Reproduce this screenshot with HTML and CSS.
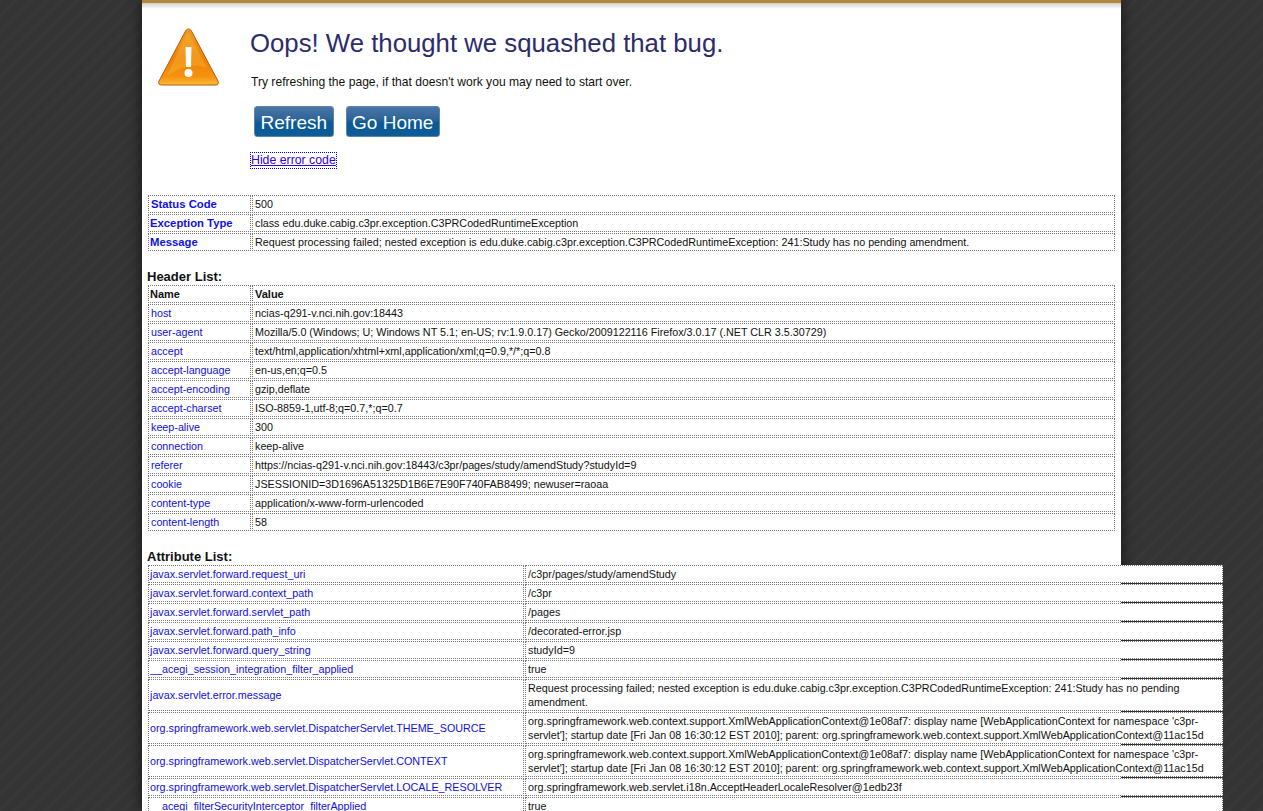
FILE: index.html
```html
<!DOCTYPE html>
<html lang="en">

<head>
    <meta charset="UTF-8">
    <title>Error</title>
    <link rel="stylesheet" href="styles.css">
</head>

<body>
    <div class="page">
        <div class="intro">
            <div class="icon-col">
                <svg class="warn-icon" width="64" height="60" viewBox="0 0 64 60">
                    <defs>
                        <linearGradient id="warnFill" x1="0" y1="0" x2="0" y2="1">
                            <stop offset="0" stop-color="#f09a20" />
                            <stop offset="0.55" stop-color="#ee8208" />
                            <stop offset="0.85" stop-color="#f59210" />
                            <stop offset="1" stop-color="#ffbc38" />
                        </linearGradient>
                    </defs>
                    <path d="M31.500 1 C33 1 34 2 35 4 L61 53 C62 55.500 61 57 58.500 57 L4.500 57 C2 57 1 55.500 2 53 L28 4 C29 2 30 1 31.500 1 Z" fill="url(#warnFill)" stroke="#b85a12" stroke-width="1" />
                    <path d="M31.500 5 L50 40 C36 34 22 40 10 48 L28 9 Z" fill="#ffc64a" opacity="0.3" />
                    <path d="M28.500 19 L34.500 19 L34 39 L29 39 Z" fill="#fff" />
                    <circle cx="31.500" cy="45" r="4" fill="#fff" />
                </svg>
            </div>
            <div class="intro-text">
                <h1>Oops! We thought we squashed that bug.</h1>
                <p>Try refreshing the page, if that doesn't work you may need to start over.</p>
                <div class="btn-row">
                    <button class="btn">Refresh</button>
                    <button class="btn">Go Home</button>
                </div>
                <a class="toggle" href="#">Hide error code</a>
            </div>
        </div>

        <table class="info status-table">
            <tr>
                <th class="key first-key">Status Code</th>
                <td>500</td>
            </tr>
            <tr>
                <th class="key">Exception Type</th>
                <td>class edu.duke.cabig.c3pr.exception.C3PRCodedRuntimeException</td>
            </tr>
            <tr>
                <th class="key">Message</th>
                <td>Request processing failed; nested exception is edu.duke.cabig.c3pr.exception.C3PRCodedRuntimeException: 241:Study has no pending amendment.</td>
            </tr>
        </table>

        <h3>Header List:</h3>
        <table class="info">
            <tr>
                <th class="name">Name</th>
                <th class="name">Value</th>
            </tr>
            <tr><td class="blue">host</td><td>ncias-q291-v.nci.nih.gov:18443</td></tr>
            <tr><td class="blue">user-agent</td><td>Mozilla/5.0 (Windows; U; Windows NT 5.1; en-US; rv:1.9.0.17) Gecko/2009122116 Firefox/3.0.17 (.NET CLR 3.5.30729)</td></tr>
            <tr><td class="blue">accept</td><td>text/html,application/xhtml+xml,application/xml;q=0.9,*/*;q=0.8</td></tr>
            <tr><td class="blue">accept-language</td><td>en-us,en;q=0.5</td></tr>
            <tr><td class="blue">accept-encoding</td><td>gzip,deflate</td></tr>
            <tr><td class="blue">accept-charset</td><td>ISO-8859-1,utf-8;q=0.7,*;q=0.7</td></tr>
            <tr><td class="blue">keep-alive</td><td>300</td></tr>
            <tr><td class="blue">connection</td><td>keep-alive</td></tr>
            <tr><td class="blue">referer</td><td>https://ncias-q291-v.nci.nih.gov:18443/c3pr/pages/study/amendStudy?studyId=9</td></tr>
            <tr><td class="blue">cookie</td><td>JSESSIONID=3D1696A51325D1B6E7E90F740FAB8499; newuser=raoaa</td></tr>
            <tr><td class="blue">content-type</td><td>application/x-www-form-urlencoded</td></tr>
            <tr><td class="blue">content-length</td><td>58</td></tr>
        </table>

        <h3 class="attr-title">Attribute List:</h3>
        <table class="info attr-table">
            <tr><td class="blue">javax.servlet.forward.request_uri</td><td>/c3pr/pages/study/amendStudy</td></tr>
            <tr><td class="blue">javax.servlet.forward.context_path</td><td>/c3pr</td></tr>
            <tr><td class="blue">javax.servlet.forward.servlet_path</td><td>/pages</td></tr>
            <tr><td class="blue">javax.servlet.forward.path_info</td><td>/decorated-error.jsp</td></tr>
            <tr><td class="blue">javax.servlet.forward.query_string</td><td>studyId=9</td></tr>
            <tr><td class="blue">__acegi_session_integration_filter_applied</td><td>true</td></tr>
            <tr><td class="blue">javax.servlet.error.message</td><td>Request processing failed; nested exception is edu.duke.cabig.c3pr.exception.C3PRCodedRuntimeException: 241:Study has no pending amendment.</td></tr>
            <tr><td class="blue">org.springframework.web.servlet.DispatcherServlet.THEME_SOURCE</td><td>org.springframework.web.context.support.XmlWebApplicationContext@1e08af7: display name [WebApplicationContext for namespace 'c3pr-servlet']; startup date [Fri Jan 08 16:30:12 EST 2010]; parent: org.springframework.web.context.support.XmlWebApplicationContext@11ac15d</td></tr>
            <tr><td class="blue">org.springframework.web.servlet.DispatcherServlet.CONTEXT</td><td>org.springframework.web.context.support.XmlWebApplicationContext@1e08af7: display name [WebApplicationContext for namespace 'c3pr-servlet']; startup date [Fri Jan 08 16:30:12 EST 2010]; parent: org.springframework.web.context.support.XmlWebApplicationContext@11ac15d</td></tr>
            <tr><td class="blue">org.springframework.web.servlet.DispatcherServlet.LOCALE_RESOLVER</td><td>org.springframework.web.servlet.i18n.AcceptHeaderLocaleResolver@1edb23f</td></tr>
            <tr><td class="blue">__acegi_filterSecurityInterceptor_filterApplied</td><td>true</td></tr>
        </table>
    </div>
</body>

</html>
```

FILE: styles.css
```css
html,
body {
    height: 811px;
    overflow: hidden;
}

body {
    margin: 0;
    font-family: "Liberation Sans", Arial, sans-serif;
    font-size: 10.76px;
    color: #111;
    background-color: #363636;
    background-image: repeating-linear-gradient(135deg, #393939 0, #343434 4px, #343434 8px, #383838 11px);
}

.page {
    width: 967px;
    height: 811px;
    margin: 0 auto;
    padding: 0 6px;
    background: linear-gradient(#b08a3a 0, #b08a3a 3px, #cfcfcf 3px, #ffffff 9px);
    box-shadow: 0 0 14px #151515;
}

.intro {
    display: flex;
    height: 194px;
}

.icon-col {
    width: 102px;
    padding: 28px 0 0 9px;
    box-sizing: border-box;
}

.warn-icon {
    display: block;
}

.intro-text {
    flex: 1;
    padding-top: 27px;
    box-sizing: border-box;
}

h1 {
    margin: 0;
    font-size: 25.75px;
    font-weight: normal;
    line-height: 32px;
    color: #2c2c6c;
}

.intro-text p {
    margin: 15px 0 0 1px;
    font-size: 12.1px;
    line-height: 16px;
    color: #111;
}

.btn-row {
    display: flex;
    gap: 12px;
    margin: 16px 0 0 4px;
}

.btn {
    height: 31px;
    padding: 2px 5.5px 0;
    border: 1px solid #5d86ad;
    border-radius: 3px;
    font-family: inherit;
    font-size: 19px;
    color: #fff;
    background: linear-gradient(#4a75a6 0, #2f6699 40%, #0a5a97 55%, #0f5c96 100%);
}

.toggle {
    display: inline-block;
    margin: 16px 0 0 1px;
    font-size: 12.3px;
    line-height: 15px;
    color: #3300ee;
    outline: 1px dotted #0000ee;
}

table.info {
    width: 969px;
    margin-left: -1px;
    border-collapse: separate;
    border-spacing: 1px;
    table-layout: fixed;
}

.info th,
.info td {
    padding: 1px 2px;
    border: 1px dotted #777;
    background: #fff;
    line-height: 14px;
    text-align: left;
    font-weight: normal;
    vertical-align: middle;
}

.info tr > :first-child {
    width: 97px;
}

.info .key {
    padding-left: 1px;
    font-size: 11.3px;
    font-weight: bold;
    color: #1010e8;
}

.info .first-key {
    padding-left: 2px;
}

.info .name {
    font-size: 11px;
    font-weight: bold;
}

.info .name:first-child {
    padding-left: 1px;
    width: 98px;
}

.info .blue {
    color: #1010e0;
}

h3 {
    margin: 17px 0 0 -1px;
    font-size: 13px;
    line-height: 15px;
    color: #111;
}

.attr-title {
    margin-top: 18px;
    line-height: 14px;
}

table.attr-table {
    width: 1077px;
}

.attr-table tr > :first-child {
    width: 370px;
}

.attr-table .blue {
    padding-left: 1px;
    padding-right: 3px;
}
```
